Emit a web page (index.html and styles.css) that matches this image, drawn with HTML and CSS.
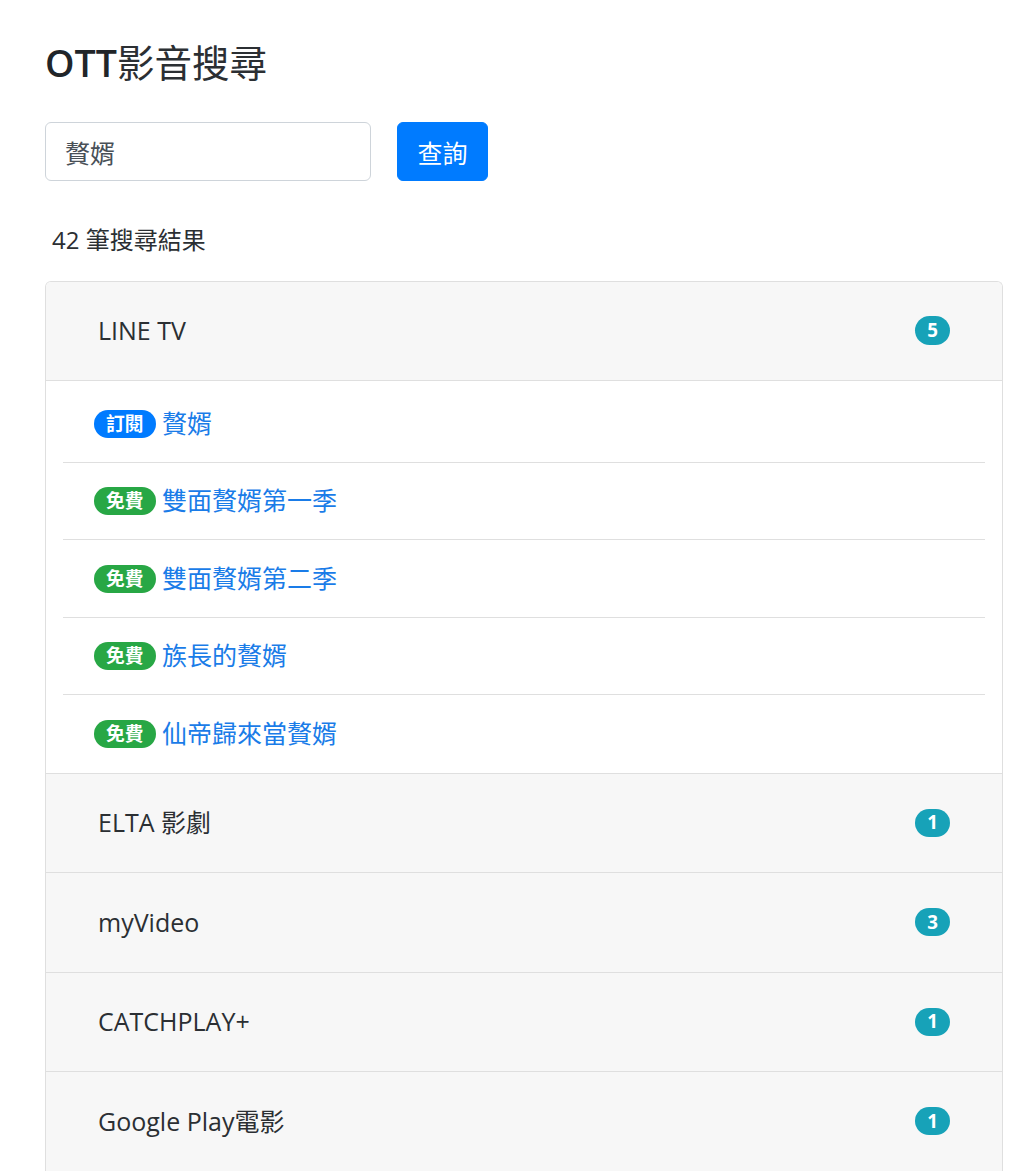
FILE: index.html
```html
<!DOCTYPE html>
<html lang="zh-Hant">
<head>
<meta charset="utf-8">
<title>OTT影音搜尋</title>
<link rel="stylesheet" href="styles.css">
</head>
<body>
<div class="page">
  <h4 class="title"><span class="title-latin">OTT</span>影音搜尋</h4>
  <form class="search">
    <input class="search-input" type="text" value="贅婿">
    <button class="search-btn" type="button">查詢</button>
  </form>
  <p class="count">42 筆搜尋結果</p>
  <div class="results">
    <div class="group">
      <div class="group-head"><span>LINE TV</span><span class="pill pill-info">5</span></div>
      <ul class="items">
        <li class="item"><span class="pill pill-blue">訂閱</span> <a href="#">贅婿</a></li>
        <li class="item"><span class="pill pill-green">免費</span> <a href="#">雙面贅婿第一季</a></li>
        <li class="item"><span class="pill pill-green">免費</span> <a href="#">雙面贅婿第二季</a></li>
        <li class="item"><span class="pill pill-green">免費</span> <a href="#">族長的贅婿</a></li>
        <li class="item"><span class="pill pill-green">免費</span> <a href="#">仙帝歸來當贅婿</a></li>
      </ul>
    </div>
    <div class="group">
      <div class="group-head"><span>ELTA 影劇</span><span class="pill pill-info">1</span></div>
    </div>
    <div class="group">
      <div class="group-head"><span>myVideo</span><span class="pill pill-info">3</span></div>
    </div>
    <div class="group">
      <div class="group-head"><span>CATCHPLAY+</span><span class="pill pill-info">1</span></div>
    </div>
    <div class="group">
      <div class="group-head"><span>Google Play電影</span><span class="pill pill-info">1</span></div>
    </div>
  </div>
</div>
</body>
</html>
```

FILE: styles.css
```css
* { box-sizing: border-box; }
html, body { margin: 0; padding: 0; background: #fff; }
body {
  font-family: "Open Sans", "Noto Sans CJK TC", sans-serif;
  font-size: 25px;
  line-height: 37.5px;
  color: #212529;
}
.page { padding: 40px 21px 0 45px; }
.title {
  margin: 0 0 37px;
  font-size: 37.5px;
  line-height: 45px;
  font-weight: 400;
  color: #2b2f33;
}
.title-latin { font-weight: 600; color: #212529; }
.search { display: flex; gap: 26px; margin: 0; }
.search-input {
  width: 326px;
  height: 59px;
  padding: 0 19px;
  border: 1px solid #ced4da;
  border-radius: 6px;
  font-family: inherit;
  font-size: 25px;
  color: #495057;
  outline: none;
}
.search-btn {
  width: 91px;
  height: 59px;
  border: 1px solid #007bff;
  border-radius: 6px;
  background: #007bff;
  color: #fff;
  font-family: inherit;
  font-size: 25px;
  padding: 0;
}
.count { margin: 40px 0 22px 7px; font-size: 24px; color: #2b2f33; }
.results {
  width: 958px;
  border: 1px solid #dfdfdf;
  border-bottom: none;
  border-radius: 6px 6px 0 0;
  overflow: hidden;
}
.group + .group { border-top: 1px solid #dfdfdf; }
.group-head {
  height: 98px;
  padding: 0 52px 0 52px;
  background: #f7f7f7;
  display: flex;
  align-items: center;
  justify-content: space-between;
  color: #2b2f33;
}
.group + .group .group-head { height: 98.5px; }
.items {
  list-style: none;
  margin: 0;
  padding: 4.5px 17px 0;
  border-top: 1px solid #dfdfdf;
}
.item {
  padding: 19.5px 31px 19.5px;
  border-bottom: 1px solid #dfdfdf;
}
.item:last-child { border-bottom: none; padding-bottom: 20.5px; }
.item a { color: #1a7ce8; text-decoration: none; }
.pill {
  display: inline-block;
  font-size: 18.75px;
  font-weight: 700;
  line-height: 1;
  padding: 4.7px 12px;
  border-radius: 20px;
  color: #fff;
  vertical-align: 2px;
}
.pill-info { background: #17a2b8; }
.pill-blue { background: #007bff; }
.pill-green { background: #28a745; }
```
